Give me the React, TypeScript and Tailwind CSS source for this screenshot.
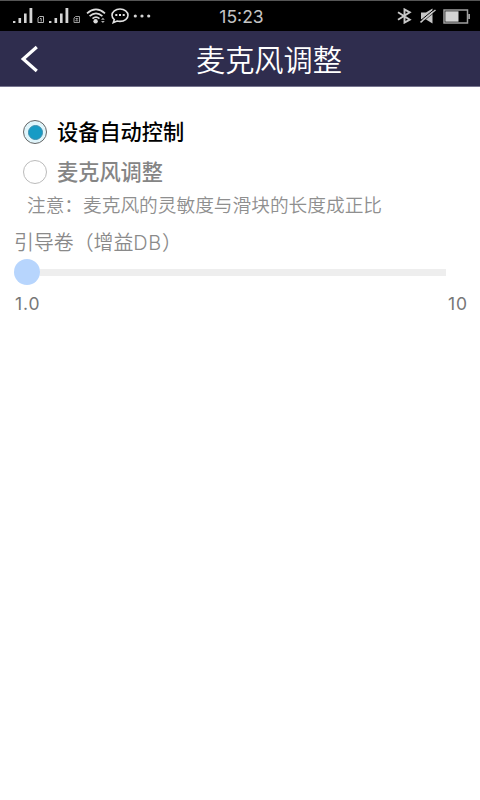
const SignalIcon = ({ sim }: { sim: string }) => (
  <svg width="34" height="18" viewBox="0 0 34 18" fill="#d4d4d4">
    <rect x="1" y="14" width="2.4" height="2" />
    <rect x="6.5" y="11" width="2.6" height="5" />
    <rect x="12" y="6.5" width="2.6" height="9.5" />
    <rect x="17.5" y="1" width="2.8" height="15" />
    {sim === "1" ? (
      <path
        d="M27.500 9.500h4V15.500h-5.500V11zM28 11.500h1.200v3"
        fill="none"
        stroke="#b4b4b4"
      />
    ) : (
      <path
        d="M27.500 9.500h4V15.500h-5.500V11zM27.500 11.500h2.300L27.700 13.800h2.500"
        fill="none"
        stroke="#9c9c9c"
      />
    )}
  </svg>
);

const WifiIcon = () => (
  <svg
    width="20"
    height="18"
    viewBox="0 0 20 18"
    fill="none"
    stroke="#dcdcdc"
    strokeWidth="1.700"
  >
    <path d="M1 6.400Q10-1.500 19 6.400" />
    <path d="M3.600 9.200Q10 3.400 16.400 9.200" />
    <path d="M6.500 11.600Q10 8.600 13.500 11.600" />
    <circle cx="9.600" cy="14.200" r="2.200" fill="#dcdcdc" stroke="none" />
    <path
      d="M15 12.800l1.900-2.100 1.900 2.100zM15 14l1.900 2.100 1.900-2.100z"
      fill="#aaa"
      stroke="none"
    />
  </svg>
);

const MessageIcon = () => (
  <svg
    width="18"
    height="16"
    viewBox="0 0 18 16"
    fill="none"
    stroke="#e2e2e2"
    strokeWidth="1.600"
  >
    <path d="M3.300 11.600C1.700 10.500 1 8.900 1 7.200 1 3.700 4.500 1 9 1s8 2.700 8 6.200-3.500 6.200-8 6.200c-1 0-2-.1-2.900-.4L2.300 14.600z" />
    <path d="M4.300 7h2M8 7h2M11.700 7h2" strokeWidth="2" />
  </svg>
);

const DotsIcon = () => (
  <svg width="18" height="4" viewBox="0 0 18 4" fill="#d4d4d4">
    <circle cx="2.300" cy="2" r="1.600" />
    <circle cx="9" cy="2" r="1.600" />
    <circle cx="15.700" cy="2" r="1.600" />
  </svg>
);

const BluetoothIcon = () => (
  <svg
    width="15"
    height="16"
    viewBox="0 0 15 16"
    fill="none"
    stroke="#c8c8c8"
    strokeWidth="1.900"
  >
    <path d="M1 4.200l11.800 7.400-5.300 3V1.400l5.300 3L1 11.800" />
  </svg>
);

const MuteIcon = () => (
  <svg width="16" height="16" viewBox="0 0 16 16">
    <path d="M1 4.500h5L12.500 .5v15L6 11.500H1z" fill="#c8c8c8" />
    <path d="M0 13L15 .7" stroke="#000" strokeWidth="1" />
    <path d="M.5 14.300L15.500 2" stroke="#c8c8c8" strokeWidth="1.500" />
    <path d="M3 13.600L16 3" stroke="#000" strokeWidth=".6" />
  </svg>
);

const BatteryIcon = () => (
  <svg width="28" height="15" viewBox="0 0 28 15">
    <rect x="1" y="1" width="23.500" height="13" fill="none" stroke="#a0a0a0" strokeWidth="1.500" />
    <rect x="2.300" y="2.300" width="13.200" height="10.400" fill="#d4d4d4" />
    <rect x="25.200" y="5" width="1.800" height="5" fill="#a0a0a0" />
  </svg>
);

const StatusBar = () => (
  <div className="grid h-[31px] grid-cols-3 items-center border-t border-[#555] bg-black pr-[9px] pl-3">
    <div className="flex items-center">
      <SignalIcon sim="1" />
      <div className="ml-[2px]">
        <SignalIcon sim="2" />
      </div>
      <div className="ml-[4px]">
        <WifiIcon />
      </div>
      <div className="ml-[5px]">
        <MessageIcon />
      </div>
      <div className="ml-[4px]">
        <DotsIcon />
      </div>
    </div>
    <span className="pt-[2px] text-center font-[Inter,sans-serif] text-[17.5px] leading-5 text-[#c4c4c4]">
      15:23
    </span>
    <div className="flex items-center justify-end">
      <BluetoothIcon />
      <div className="ml-[8px]">
        <MuteIcon />
      </div>
      <div className="ml-[7px]">
        <BatteryIcon />
      </div>
    </div>
  </div>
);

const Header = () => (
  <header className="flex h-14 items-center border-b border-[#77758f] bg-[#2f2d4e]">
    <button type="button" className="ml-5 h-7 w-5" aria-label="返回">
      <svg width="20" height="28" viewBox="0 0 20 28" fill="none" stroke="#fff" strokeWidth="3.200">
        <path d="M16.800 2L3.200 14l13.600 12" />
      </svg>
    </button>
    <h1 className="ml-[156px] pt-px text-[29.2px] leading-none font-[350] whitespace-nowrap text-white">
      麦克风调整
    </h1>
  </header>
);

const options = [
  { label: "设备自动控制", selected: true },
  { label: "麦克风调整", selected: false },
];

export default function App() {
  return (
    <div className="h-[800px] w-[480px] overflow-hidden bg-white font-['Noto_Sans_CJK_SC',sans-serif]">
      <StatusBar />
      <Header />
      <main className="pt-[25px]">
        {options.map((option) => (
          <label key={option.label} className="flex h-10 items-center pl-[23px]">
            <span
              className={`flex size-6 items-center justify-center rounded-full border ${
                option.selected ? "border-[#666] bg-[#e0f5fb]" : "border-[#bbb] bg-white"
              }`}
            >
              {option.selected && (
                <span className="size-[15px] rounded-full border border-[#3d8fae] bg-[#169bc5]" />
              )}
            </span>
            <span
              className={`ml-[10px] pb-[2px] text-[21.200px] leading-none font-medium ${
                option.selected ? "text-black" : "text-[#858585]"
              }`}
            >
              {option.label}
            </span>
          </label>
        ))}
        <p className="-mt-[2px] pl-[27px] text-[18.7px] leading-[27px] font-[350] whitespace-nowrap text-[#8f8f8f]">
          注意：麦克风的灵敏度与滑块的长度成正比
        </p>
        <p className="mt-[11px] h-7 pl-[14px] text-[19.9px] leading-[28px] font-[350] text-[#8a8a8a]">
          引导卷（增益
          <span className="font-[Inter,sans-serif] tracking-[0.7px]">DB</span>
          ）
        </p>
        <div className="mt-[3px] ml-[14px] flex h-[26px] w-[432px] items-center">
          <div className="h-[26px] w-[26px] rounded-full bg-[#b7d5fd]" />
          <div className="h-[7px] flex-1 bg-[#eee]" />
        </div>
        <div className="mt-[7px] flex justify-between pr-[12px] pl-[15px] font-[Inter,sans-serif] text-[17.5px] leading-6 tracking-[0.9px] text-[#777]">
          <span>1.0</span>
          <span>10</span>
        </div>
      </main>
    </div>
  );
}
